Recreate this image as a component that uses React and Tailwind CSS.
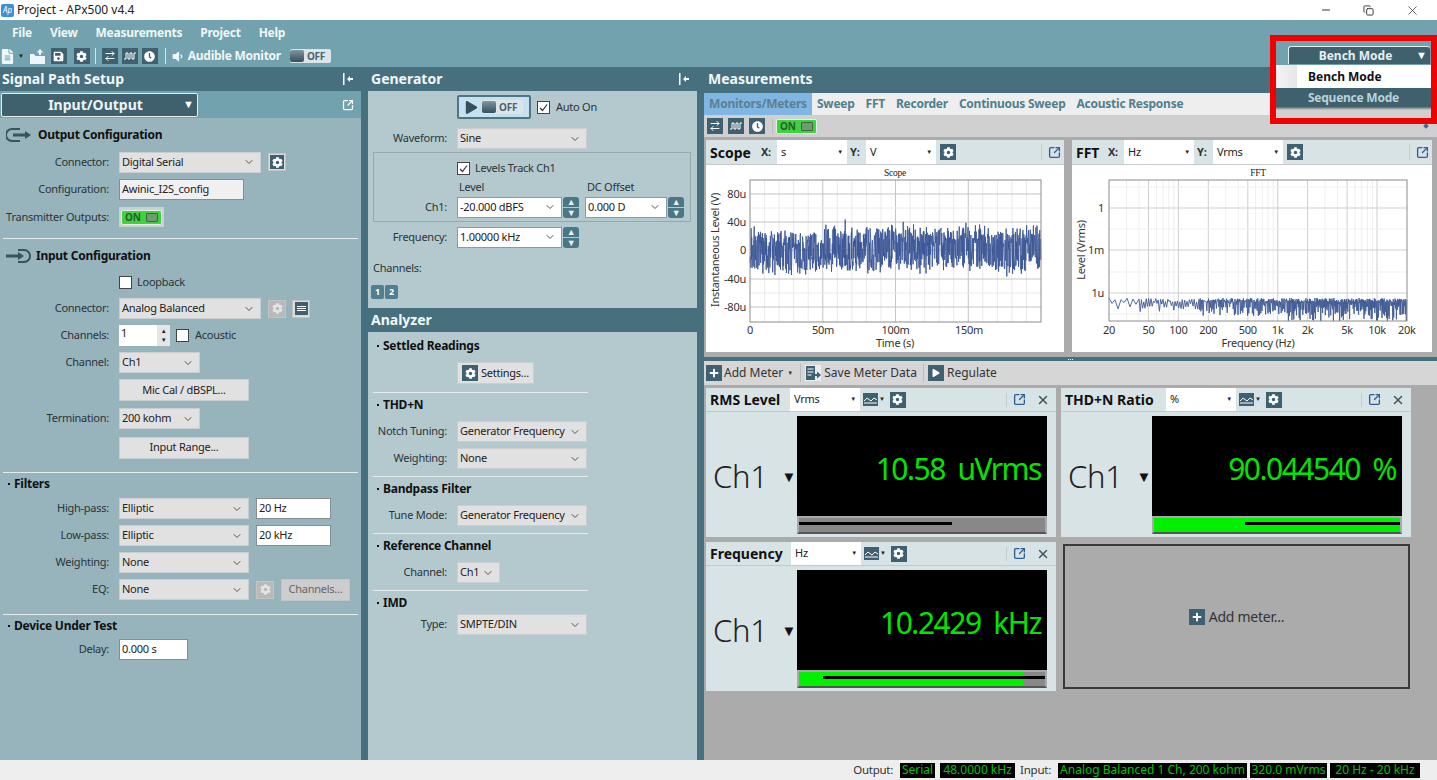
import { FaCog, FaClock, FaFileAlt, FaSave, FaPlay, FaPlus, FaVolumeDown } from 'react-icons/fa';
import { ChevronDown, SquareArrowOutUpRight, X, Minus, Copy, ArrowRightLeft } from 'lucide-react';

// seeded noise so the plots stay the same on every load
const makeRand = (seed) => () => {
  seed = (seed * 16807) % 2147483647;
  return seed / 2147483647;
};

const scopePath = (() => {
  const r = makeRand(4711);
  let d = '';
  for (let x = 44; x < 335; x += 0.28) {
    const slow = Math.sin(x * 0.09) * 2 + Math.sin(x * 0.021) * 2;
    const amp = 16 + r() * 10 + (r() > 0.985 ? 9 : 0);
    const y = 85 + slow + (r() > 0.5 ? 1 : -1) * amp * (0.15 + r() * 0.85);
    d += `${d ? 'L' : 'M'}${x.toFixed(1)} ${y.toFixed(1)}`;
  }
  return d;
})();

const fftPath = (() => {
  const r = makeRand(1234);
  let d = '';
  let x = 37;
  let up = true;
  while (x < 335) {
    const t = (x - 37) / 298;
    const depth = t < 0.1 ? 8 : t < 0.3 ? 11 : t < 0.6 ? 15 : 22;
    const y = up ? 133 + r() * 4 : 136 + r() * depth;
    d += `${d ? 'L' : 'M'}${x.toFixed(1)} ${Math.min(y, 156).toFixed(1)}`;
    x += t < 0.1 ? 3 : t < 0.3 ? 1.2 : t < 0.6 ? 0.6 : 0.45;
    up = !up;
  }
  return d;
})();

const Dock = () => (
  <svg width="11" height="12" viewBox="0 0 11 12" className="text-white">
    <rect x="0" y="0" width="1.5" height="12" fill="currentColor" />
    <path d="M4 6l3-3v2h3v2h-3v2z" fill="currentColor" />
  </svg>
);

const Box = ({ children, className = 'bg-[#3e6070] text-white' }) => (
  <span className={`inline-flex h-[16px] w-[16px] shrink-0 items-center justify-center ${className}`}>{children}</span>
);

const Gear = ({ off }) => (
  <span className={`inline-flex h-[18px] w-[18px] shrink-0 items-center justify-center border border-[#c4c4c4] ${off ? 'bg-[#b9b9b9] text-[#e4e4e4]' : 'bg-[#dcdcdc]'}`}>
    <span className={`inline-flex h-[14px] w-[14px] items-center justify-center ${off ? '' : 'bg-[#3e6070] text-white'}`}>
      <FaCog size={11} />
    </span>
  </span>
);

const GearBox = () => (
  <Box><FaCog size={11} /></Box>
);

const Wave = () => (
  <Box>
    <svg width="12" height="10" viewBox="0 0 12 10" fill="none" stroke="currentColor" strokeWidth="1">
      <path d="M0 8h2V2h2v6h2V2h2v6h2V2h2" />
    </svg>
  </Box>
);

const Swap = () => (
  <Box><ArrowRightLeft size={12} strokeWidth={2} /></Box>
);

const Clock = () => (
  <Box><FaClock size={11} /></Box>
);

const OpenProject = () => (
  <svg width="16" height="15" viewBox="0 0 16 15" fill="currentColor">
    <path d="M0 5h4l1.5 2H15v8H0z" />
    <path d="M10 0l3.5 3.5H11V6H9V3.5H6.5z" />
  </svg>
);

const SaveData = () => (
  <Box className="bg-[#e8eef0] text-[#3e6070]">
    <svg width="16" height="16" viewBox="0 0 16 16" fill="none" stroke="currentColor">
      <path d="M1 1h9v14H1z" fill="#3e6070" stroke="none" />
      <path d="M2.5 4h6M2.5 7h6M2.5 10h4" stroke="#fff" />
      <path d="M8 10h5" strokeWidth="2" />
      <path d="M12 6.5l4 3.5-4 3.5z" fill="currentColor" stroke="none" />
    </svg>
  </Box>
);

const Toggle = ({ on }) =>
  on ? (
    <span className="inline-flex h-[15px] w-[41px] items-center justify-between rounded-[2px] border border-[#e2efe2] bg-[#3fd13f] px-[3px] text-[10px] font-bold text-[#24602a]">
      ON
      <span className="h-[9px] w-[12px] rounded-[1px] bg-[#6f9c6f] border border-[#3a6a3a]" />
    </span>
  ) : (
    <span className="inline-flex h-[14px] w-[41px] items-center gap-[3px] rounded-[2px] bg-[#dbe4e7] pr-[2px] text-[10px] font-bold text-[#4b6470]">
      <span className="h-[12px] w-[14px] rounded-[2px] bg-gradient-to-b from-[#8297a1] to-[#34505e]" />
      OFF
    </span>
  );

const Select = ({ value, w, white }) => (
  <span className={`flex h-[21px] shrink-0 items-center justify-between border pl-[2px] pr-[5px] text-[11px] text-[#222] ${w} ${white ? 'border-[#8b9a9f] bg-white' : 'border-[#c9cfd1] bg-[#e1e1e1]'}`}>
    <span className="whitespace-nowrap">{value}</span>
    <ChevronDown size={12} className="shrink-0 text-[#555]" />
  </span>
);

const TextBox = ({ value, w, bg = 'bg-white' }) => (
  <span className={`flex h-[21px] shrink-0 items-center border border-[#868e91] pl-[2px] text-[11px] text-[#222] ${w} ${bg}`}>{value}</span>
);

const Btn = ({ children, w, muted }) => (
  <span className={`flex h-[22px] shrink-0 items-center justify-center border text-[11px] ${w} ${muted ? 'border-[#bdc5c8] bg-[#cdcdcd] text-[#666]' : 'border-[#c9cfd1] bg-[#e1e1e1] text-[#222]'}`}>{children}</span>
);

const Check = ({ checked }) => (
  <span className="flex h-[13px] w-[13px] shrink-0 items-center justify-center border border-[#444] bg-white">
    {checked && (
      <svg width="11" height="11" viewBox="0 0 11 11" fill="none" stroke="#333" strokeWidth="1.2">
        <path d="M2 6l2.5 2.5L9 2.5" />
      </svg>
    )}
  </span>
);

const Spinner = () => (
  <span className="flex w-[16px] shrink-0 flex-col gap-[1px]">
    <span className="flex h-[10px] items-center justify-center rounded-t-[3px] bg-[#4a7685] text-[9px] leading-none text-[#e8f0f2]">▲</span>
    <span className="flex h-[10px] items-center justify-center rounded-b-[3px] bg-[#4a7685] text-[9px] leading-none text-[#e8f0f2]">▼</span>
  </span>
);

// left column rows: label ends at x=109, control starts at x=119
const Row = ({ label, h = 'h-[27px]', children }) => (
  <div className={`flex items-center ${h}`}>
    <span className="w-[109px] shrink-0 whitespace-nowrap text-right text-[11px] text-[#2b3438]">{label}</span>
    <div className="ml-[10px] flex items-center gap-[7px]">{children}</div>
  </div>
);

// middle column rows: label ends at x=447, control starts at x=457
const GenRow = ({ label, h = 'h-[27px]', children }) => (
  <div className={`flex items-center ${h}`}>
    <span className="w-[79px] shrink-0 whitespace-nowrap text-right text-[11px] text-[#2b3438]">{label}</span>
    <div className="ml-[10px] flex items-center gap-[1px]">{children}</div>
  </div>
);

const Section = ({ title, h, pl = 'pl-[8px]' }) => (
  <div className={`flex items-center gap-[4px] text-[12px] font-bold text-[#111] ${pl} ${h}`}>
    <span className="h-[2px] w-[2px] bg-[#111]" />
    {title}
  </div>
);

const PanelTitle = ({ children, dock }) => (
  <div className="flex h-[24px] shrink-0 items-center justify-between pb-[1px] pl-[2px] pr-[7px] text-[14px] font-bold tracking-normal text-[#f2f7f8]">
    <span>{children}</span>
    {dock && <Dock />}
  </div>
);

const Arrow = ({ dir }) => (
  <svg width="26" height="16" viewBox="0 0 26 16" fill="none" stroke="#38525e" strokeWidth="2">
    {dir === 'out' ? (
      <>
        <path d="M14 2H6a6 6 0 0 0 0 12h8" />
        <path d="M7 8h14" strokeWidth="3" />
        <path d="M19 4l6 4-6 4z" fill="#38525e" stroke="none" />
      </>
    ) : (
      <>
        <path d="M12 2h6a6 6 0 0 1 0 12h-6" />
        <path d="M0 8h14" strokeWidth="3" />
        <path d="M12 4l6 4-6 4z" fill="#38525e" stroke="none" />
      </>
    )}
  </svg>
);

const SignalPath = () => (
  <div className="flex h-full w-[361px] shrink-0 flex-col">
    <PanelTitle dock>Signal Path Setup</PanelTitle>
    <div className="flex h-[27px] shrink-0 items-center justify-between bg-[#71a2ad] pl-[1px] pr-[7px]">
      <span className="relative flex h-[24px] w-[197px] items-center justify-center rounded-[2px] border border-[#e6eef0] bg-[#3f616d] pr-[8px] text-[14px] font-bold tracking-normal text-[#eef4f5]">
        Input/Output
        <span className="absolute right-[3px] text-[11px] text-white">▼</span>
      </span>
      <SquareArrowOutUpRight size={12} strokeWidth={2.5} className="text-white" />
    </div>
    <div className="flex-1 bg-[#97b3bc] pt-[4px]">
      <div className="flex h-[26px] items-center gap-[6px] pl-[6px] text-[12px] font-bold text-[#111]">
        <Arrow dir="out" /> Output Configuration
      </div>
      <Row label="Connector:" h="h-[28px]">
        <Select value="Digital Serial" w="w-[142px]" />
        <Gear />
      </Row>
      <Row label="Configuration:">
        <TextBox value="Awinic_I2S_config" w="w-[125px]" bg="bg-[#f0f0f0]" />
      </Row>
      <Row label="Transmitter Outputs:" h="h-[28px]">
        <span className="flex h-[20px] w-[45px] items-center justify-center bg-[#c8d2d4]"><Toggle on /></span>
      </Row>
      <div className="mx-[3px] mt-[7px] h-[1px] bg-[#e4ecee]" />
      <div className="flex h-[34px] items-center gap-[4px] pl-[6px] text-[12px] font-bold text-[#111]">
        <Arrow dir="in" /> Input Configuration
      </div>
      <div className="flex h-[18px] items-center gap-[5px] pl-[119px] text-[11px] text-[#2b3438]">
        <Check /> Loopback
      </div>
      <div className="mt-[4px]">
        <Row label="Connector:">
          <Select value="Analog Balanced" w="w-[142px]" />
          <Gear off />
          <span className="-ml-[1px] flex h-[18px] w-[18px] items-center justify-center border border-[#c4c4c4] bg-[#dcdcdc]">
            <span className="flex h-[13px] w-[13px] flex-col justify-center gap-[1px] bg-[#3e6070] px-[2px]">
              <span className="h-[1px] bg-white" /><span className="h-[1px] bg-white" /><span className="h-[1px] bg-white" />
            </span>
          </span>
        </Row>
      </div>
      <Row label="Channels:">
        <span className="flex h-[21px] w-[51px] items-start justify-between bg-white pl-[2px] text-[11px] text-[#222]">
          1
          <span className="flex h-full w-[13px] flex-col justify-center bg-[#e6e6e6] text-center text-[6px] leading-[9px] text-[#222]">
            <span>▲</span><span>▼</span>
          </span>
        </span>
        <span className="-ml-[1px] flex items-center gap-[6px] text-[11px] text-[#2b3438]"><Check /> Acoustic</span>
      </Row>
      <Row label="Channel:">
        <Select value="Ch1" w="w-[81px]" />
      </Row>
      <Row label="" h="h-[28px]">
        <Btn w="w-[130px]">Mic Cal / dBSPL...</Btn>
      </Row>
      <Row label="Termination:" h="h-[29px]">
        <Select value="200 kohm" w="w-[81px]" />
      </Row>
      <Row label="" h="h-[29px]">
        <Btn w="w-[130px]">Input Range...</Btn>
      </Row>
      <div className="mx-[3px] mt-[10px] h-[1px] bg-[#e4ecee]" />
      <Section title="Filters" h="h-[22px]" />
      <Row label="High-pass:">
        <Select value="Elliptic" w="w-[130px]" />
        <TextBox value="20 Hz" w="w-[75px]" />
      </Row>
      <Row label="Low-pass:">
        <Select value="Elliptic" w="w-[130px]" />
        <TextBox value="20 kHz" w="w-[75px]" />
      </Row>
      <Row label="Weighting:">
        <Select value="None" w="w-[130px]" />
      </Row>
      <Row label="EQ:">
        <Select value="None" w="w-[130px]" />
        <Gear off />
        <Btn w="w-[69px]" muted>Channels...</Btn>
      </Row>
      <div className="mx-[3px] mt-[11px] h-[1px] bg-[#e4ecee]" />
      <Section title="Device Under Test" h="h-[21px]" />
      <Row label="Delay:">
        <TextBox value="0.000 s" w="w-[69px]" />
      </Row>
    </div>
  </div>
);

const Rule = ({ mt }) => <div className={`ml-[5px] h-[1px] w-[215px] bg-[#e4ecee] ${mt}`} />;

const Middle = () => (
  <div className="ml-[6px] flex h-full w-[330px] shrink-0 flex-col">
    <PanelTitle dock><span className="pl-[2px]">Generator</span></PanelTitle>
    <div className="ml-[1px] h-[217px] shrink-0 bg-[#b3c9ce] pt-[4px]">
      <div className="flex h-[24px] items-center pl-[89px]">
        <span className="flex h-[24px] w-[74px] items-center gap-[4px] rounded-[2px] border-2 border-[#4d7585] bg-[#c5e0ef] pl-[6px] text-[#33505e]">
          <FaPlay size={13} />
          <Toggle />
        </span>
        <span className="ml-[6px] flex items-center gap-[6px] text-[11px] text-[#2b3438]"><Check checked /> Auto On</span>
      </div>
      <div className="mt-[9px]">
        <GenRow label="Waveform:" h="h-[21px]"><Select value="Sine" w="w-[130px]" /></GenRow>
      </div>
      <div className="ml-[5px] mt-[3px] h-[70px] w-[318px] border border-[#96a8ad]">
        <div className="flex h-[30px] items-center gap-[5px] pl-[83px] text-[11px] text-[#2b3438]"><Check checked /> Levels Track Ch1</div>
        <div className="flex h-[9px] items-center pl-[85px] text-[11px] text-[#2b3438]">
          <span className="w-[128px]">Level</span>
          <span>DC Offset</span>
        </div>
        <div className="flex h-[29px] items-center pt-[1px]">
          <span className="w-[73px] text-right text-[11px] text-[#2b3438]">Ch1:</span>
          <div className="ml-[10px] flex items-center gap-[1px]">
            <Select value="-20.000 dBFS" w="w-[105px]" white />
            <Spinner />
            <span className="ml-[5px]"><Select value="0.000 D" w="w-[82px]" white /></span>
            <Spinner />
          </div>
        </div>
      </div>
      <div className="mt-[4px]">
        <GenRow label="Frequency:" h="h-[22px]">
          <Select value="1.00000 kHz" w="w-[105px]" white />
          <Spinner />
        </GenRow>
      </div>
      <div className="mt-[12px] pl-[5px] text-[11px] text-[#2b3438]">Channels:</div>
      <div className="mt-[8px] flex gap-[1px] pl-[3px]">
        <span className="flex h-[14px] w-[13px] items-center justify-center rounded-[2px] bg-[#4f7f90] text-[9px] font-bold text-white">1</span>
        <span className="flex h-[14px] w-[13px] items-center justify-center rounded-[2px] bg-[#4f7f90] text-[9px] font-bold text-white">2</span>
      </div>
    </div>
    <PanelTitle><span className="pl-[2px]">Analyzer</span></PanelTitle>
    <div className="ml-[1px] flex-1 bg-[#b3c9ce] pt-[3px]">
      <Section title="Settled Readings" h="h-[21px]" pl="pl-[9px]" />
      <div className="mt-[6px] pl-[89px]">
        <Btn w="w-[77px]"><span className="flex items-center gap-[3px]"><GearBox /> Settings...</span></Btn>
      </div>
      <Rule mt="mt-[8px]" />
      <Section title="THD+N" h="h-[23px]" pl="pl-[9px]" />
      <div className="mt-[2px]">
        <GenRow label="Notch Tuning:" h="h-[27px]"><Select value="Generator Frequency" w="w-[130px]" /></GenRow>
      </div>
      <GenRow label="Weighting:"><Select value="None" w="w-[130px]" /></GenRow>
      <Rule mt="mt-[4px]" />
      <Section title="Bandpass Filter" h="h-[23px]" pl="pl-[9px]" />
      <div className="mt-[2px]">
        <GenRow label="Tune Mode:" h="h-[27px]"><Select value="Generator Frequency" w="w-[130px]" /></GenRow>
      </div>
      <Rule mt="mt-[4px]" />
      <Section title="Reference Channel" h="h-[24px]" pl="pl-[9px]" />
      <div className="mt-[1px]">
        <GenRow label="Channel:" h="h-[27px]"><Select value="Ch1" w="w-[43px]" /></GenRow>
      </div>
      <Rule mt="mt-[4px]" />
      <Section title="IMD" h="h-[23px]" pl="pl-[9px]" />
      <GenRow label="Type:" h="h-[21px]"><Select value="SMPTE/DIN" w="w-[130px]" /></GenRow>
    </div>
  </div>
);

const AxisSelect = ({ value }) => (
  <span className="flex h-[24px] w-[70px] shrink-0 items-center justify-between bg-white px-[4px] text-[11px] text-[#222]">
    {value}
    <span className="text-[6px] text-[#222]">▼</span>
  </span>
);

const ChartPanel = ({ title, x, y, w, titleW, children }) => (
  <div className={`flex h-[212px] flex-col bg-white ${w}`}>
    <div className="flex h-[25px] shrink-0 items-center bg-[#d8e3e6] border-b border-[#c4c8ca] pl-[4px] pr-[3px]">
      <span className={`shrink-0 text-[14px] font-bold tracking-normal text-[#111] ${titleW}`}>{title}</span>
      <span className="w-[16px] shrink-0 text-[11px] font-bold text-[#333]">X:</span>
      <AxisSelect value={x} />
      <span className="w-[19px] shrink-0 pl-[3px] text-[11px] font-bold text-[#333]">Y:</span>
      <AxisSelect value={y} />
      <span className="ml-[4px] flex"><GearBox /></span>
      <span className="ml-auto flex h-[16px] items-center border-l border-[#c4cccf] pl-[6px]">
        <SquareArrowOutUpRight size={13} strokeWidth={2.5} className="text-[#2d5f96]" />
      </span>
    </div>
    {children}
  </div>
);

const tickClass = 'fill-[#333] text-[11px]';

const ScopeChart = () => {
  const xMinor = [];
  for (let i = 1; i < 20; i++) xMinor.push(44 + i * 14.55);
  const yLines = [29, 43, 57, 71, 85, 99, 114, 128, 142];
  const xTicks = [[44, '0'], [117, '50m'], [189.5, '100m'], [263, '150m']];
  const yTicks = [[29, '80u'], [57, '40u'], [85, '0'], [113.5, '-40u'], [142, '-80u']];
  return (
    <svg width="356" height="187" viewBox="0 0 356 187" className="font-['Noto_Sans',sans-serif]">
      <text x="189" y="11" textAnchor="middle" fontFamily="Liberation Serif" fontSize="9.5" fill="#222">Scope</text>
      {xMinor.map((x) => (
        <line key={x} x1={x} x2={x} y1="15" y2="157" stroke={Math.round((x - 44) / 14.55) % 5 === 0 ? '#c4c4c4' : '#eaeaea'} />
      ))}
      {yLines.map((y, i) => (
        <line key={y} x1="44" x2="335" y1={y} y2={y} stroke={i % 2 === 0 ? '#c4c4c4' : '#eaeaea'} />
      ))}
      <path d={scopePath} fill="none" stroke="#3c5796" strokeWidth="0.9" />
      <rect x="44" y="15" width="291" height="142" fill="none" stroke="#8c8c8c" />
      {xTicks.map(([x, t]) => (
        <text key={t} x={x} y="169" textAnchor="middle" className={tickClass}>{t}</text>
      ))}
      {yTicks.map(([y, t]) => (
        <text key={t} x="40" y={y + 4} textAnchor="end" className={tickClass}>{t}</text>
      ))}
      <text x="189" y="182" textAnchor="middle" className={tickClass}>Time (s)</text>
      <text transform="translate(13 85) rotate(-90)" textAnchor="middle" className={tickClass}>Instantaneous Level (V)</text>
    </svg>
  );
};

const FftChart = () => {
  const decade = 99.3;
  const xAt = (f) => 37 + Math.log10(f / 20) * decade;
  const minor = [30, 40, 60, 70, 80, 90, 300, 400, 600, 700, 800, 900, 3000, 4000, 6000, 7000, 8000, 9000];
  const major = [50, 100, 200, 500, 1000, 2000, 5000, 10000];
  const yMajor = [43, 85, 128];
  const yMinor = [22, 64, 107, 149];
  const labels = [[20, '20'], [50, '50'], [100, '100'], [200, '200'], [500, '500'], [1000, '1k'], [2000, '2k'], [5000, '5k'], [10000, '10k'], [20000, '20k']];
  return (
    <svg width="360" height="187" viewBox="0 0 360 187" className="font-['Noto_Sans',sans-serif]">
      <text x="186" y="11" textAnchor="middle" fontFamily="Liberation Serif" fontSize="9.5" fill="#222">FFT</text>
      {minor.map((f) => (
        <line key={f} x1={xAt(f)} x2={xAt(f)} y1="15" y2="156" stroke="#efefef" />
      ))}
      {major.map((f) => (
        <line key={f} x1={xAt(f)} x2={xAt(f)} y1="15" y2="156" stroke="#cfcfcf" />
      ))}
      {yMinor.map((y) => (
        <line key={y} x1="37" x2="335" y1={y} y2={y} stroke="#efefef" />
      ))}
      {yMajor.map((y) => (
        <line key={y} x1="37" x2="335" y1={y} y2={y} stroke="#cfcfcf" />
      ))}
      <path d={fftPath} fill="none" stroke="#3f5a94" strokeWidth="0.9" />
      <rect x="37" y="15" width="298" height="141" fill="none" stroke="#8c8c8c" />
      {labels.map(([f, t]) => (
        <text key={t} x={xAt(f)} y="169" textAnchor="middle" className={tickClass}>{t}</text>
      ))}
      {[[43, '1'], [85, '1m'], [128, '1u']].map(([y, t]) => (
        <text key={t} x="32" y={y + 4} textAnchor="end" className={tickClass}>{t}</text>
      ))}
      <text x="186" y="182" textAnchor="middle" className={tickClass}>Frequency (Hz)</text>
      <text transform="translate(13 85) rotate(-90)" textAnchor="middle" className={tickClass}>Level (Vrms)</text>
    </svg>
  );
};

const Meter = ({ title, titleW, unit, value, fill, line }) => (
  <div className="flex h-[149px] w-[350px] flex-col bg-[#d8e3e6]">
    <div className="flex h-[24px] shrink-0 items-center border-b border-[#c4c8ca] pl-[4px] pr-[6px]">
      <span className={`shrink-0 whitespace-nowrap text-[14px] font-bold tracking-normal text-[#111] ${titleW}`}>{title}</span>
      <span className="flex h-[23px] w-[70px] shrink-0 items-center justify-between bg-white px-[4px] text-[11px] text-[#222]">
        {unit}
        <span className="text-[6px]">▼</span>
      </span>
      <span className="ml-[3px] flex items-center gap-[1px]">
        <span className="flex h-[13px] w-[15px] items-center justify-center bg-[#3e6070]">
          <svg width="13" height="9" viewBox="0 0 13 9" fill="none" stroke="#fff" strokeWidth="1"><path d="M0 6l3-3 4 3 3-3 3 2M0 8h13" /></svg>
        </span>
        <span className="text-[6px] text-[#222]">▼</span>
      </span>
      <span className="ml-[5px] flex"><GearBox /></span>
      <span className="ml-auto flex items-center gap-[10px] border-l border-[#c4cccf] pl-[6px]">
        <SquareArrowOutUpRight size={13} strokeWidth={2.5} className="text-[#2d5f96]" />
        <X size={14} strokeWidth={2.5} className="text-[#3e5560]" />
      </span>
    </div>
    <div className="flex flex-1 items-stretch pb-[3px] pt-[4px]">
      <div className="flex w-[91px] shrink-0 items-center justify-between pl-[7px] pr-[1px] pt-[3px]">
        <span className="text-[31px] font-light leading-none text-[#222]">Ch1</span>
        <span className="text-[15px] leading-none text-[#111]">▼</span>
      </div>
      <div className="flex w-[250px] flex-col">
        <div className="flex h-[100px] items-center justify-end bg-black pr-[6px] pt-[5px] text-[30px] leading-none tracking-[-1.5px] text-[#00e600] whitespace-pre">{value}</div>
        <div className="relative h-[18px] border-2 border-[#a9a9a9] border-b-[#555] bg-[#888]">
          {fill && <div className={`h-full bg-[#00f000] ${fill}`} />}
          <div className={`absolute top-[4px] h-[3px] bg-black ${line}`} />
        </div>
      </div>
    </div>
  </div>
);

const tabs = ['Sweep', 'FFT', 'Recorder', 'Continuous Sweep', 'Acoustic Response'];

const Measurements = () => (
  <div className="ml-[7px] flex h-full flex-1 flex-col">
    <PanelTitle><span className="pl-[2px]">Measurements</span></PanelTitle>
    <div className="mt-[2px] flex h-[22px] shrink-0 items-center bg-[#eeeeee] text-[12px] font-bold text-[#4f7f8f]">
      <span className="flex h-full w-[108px] items-center justify-center bg-[#7fb6e4] text-[#5d7f92]">Monitors/Meters</span>
      {tabs.map((t) => (
        <span key={t} className="ml-[5px] mr-[6px] whitespace-nowrap">{t}</span>
      ))}
    </div>
    <div className="flex h-[22px] shrink-0 items-center gap-[5px] bg-[#d0d0d0] pl-[3px]">
      <Swap /><Wave /><Clock />
      <span className="ml-[2px] flex border-l border-[#bbb] pl-[3px]"><Toggle on /></span>
      <span className="ml-auto mr-[9px] h-[4px] w-[4px] rotate-45 bg-[#3e6a9a]" />
    </div>
    <div className="flex h-[220px] shrink-0 gap-[8px] bg-[#ababab] pl-[2px] pt-[3px]">
      <ChartPanel title="Scope" x="s" y="V" w="w-[358px]" titleW="w-[51px]"><ScopeChart /></ChartPanel>
      <ChartPanel title="FFT" x="Hz" y="Vrms" w="w-[360px]" titleW="w-[32px]"><FftChart /></ChartPanel>
    </div>
    <div className="flex h-[4px] shrink-0 items-center justify-center gap-[1px] bg-[#47707f]">
      <span className="h-[1px] w-[1px] bg-white" /><span className="h-[1px] w-[1px] bg-white" /><span className="h-[1px] w-[1px] bg-white" />
    </div>
    <div className="flex h-[24px] shrink-0 items-center bg-[#d6d6d6] pl-[2px] text-[12px] tracking-normal text-[#333]">
      <span className="flex items-center gap-[2px]"><Box><FaPlus size={10} /></Box> Add Meter <span className="ml-[2px] text-[6px]">▼</span></span>
      <span className="ml-[7px] flex items-center gap-[3px] border-l border-[#bbb] pl-[4px]"><SaveData /> Save Meter Data</span>
      <span className="ml-[6px] flex items-center gap-[3px] border-l border-[#bbb] pl-[4px]"><Box><FaPlay size={8} /></Box> Regulate</span>
    </div>
    <div className="flex-1 bg-[#ababab] pl-[2px] pt-[3px]">
      <div className="flex gap-[5px]">
        <Meter title="RMS Level" titleW="w-[80px]" unit="Vrms" value="10.58  uVrms" line="left-0 w-[153px]" />
        <Meter title="THD+N Ratio" titleW="w-[101px]" unit="%" value="90.044540  %" fill="w-full" line="left-[91px] right-0" />
      </div>
      <div className="mt-[5px] flex gap-[5px]">
        <Meter title="Frequency" titleW="w-[81px]" unit="Hz" value="10.2429  kHz" fill="w-[224px]" line="left-[24px] right-0" />
        <div className="ml-[2px] mt-[2px] flex h-[145px] w-[347px] items-center justify-center gap-[4px] border-2 border-[#3a3a3a] bg-[#ababab] text-[14px] text-[#333]">
          <Box><FaPlus size={10} /></Box> Add meter...
        </div>
      </div>
    </div>
  </div>
);

const ModeMenu = () => (
  <div className="absolute left-[1270px] top-[35px] h-[89px] w-[167px] border-[6px] border-[#f00000] bg-[#d0d0d0]">
    <div className="flex h-[24px] items-end justify-end bg-[#71a2ad] pb-[1px] pr-[1px]">
      <span className="relative flex h-[18px] w-[142px] items-center justify-center rounded-t-[3px] border-t border-l border-[#e6eef0] bg-[#3f616d] pr-[8px] text-[12px] font-bold tracking-normal text-[#e6eff1]">
        Bench Mode
        <span className="absolute right-[3px] text-[11px] text-white">▼</span>
      </span>
    </div>
    <div className="flex h-[23px] bg-white">
      <span className="w-[21px] bg-gradient-to-r from-[#f4f4f4] to-[#e6e6e6]" />
      <span className="flex items-center pl-[11px] text-[12px] font-bold tracking-normal text-[#111]">Bench Mode</span>
    </div>
    <div className="flex h-[19px] items-center bg-[#3f616d] pl-[32px] text-[12px] font-bold text-[#b9d2da]">Sequence Mode</div>
    <div className="h-[3px] bg-gradient-to-b from-[#666] to-[#d0d0d0]" />
  </div>
);

const inputBoxes = [
  ['Analog Balanced 1 Ch, 200 kohm', 'w-[189px]'],
  ['320.0 mVrms', 'w-[77px]'],
  ['20 Hz - 20 kHz', 'w-[90px]'],
];

const StatusBox = ({ text, w }) => (
  <span className={`flex h-[15px] items-center justify-center whitespace-nowrap bg-black text-[12px] tracking-normal text-[#00c000] ${w}`}>{text}</span>
);

export default function App() {
  return (
    <div className="relative flex h-[780px] w-[1437px] flex-col overflow-hidden bg-[#47707f] font-['Noto_Sans',sans-serif] tracking-[-0.25px]">
      <div className="flex h-[20px] shrink-0 items-center bg-white pl-[1px] pr-[17px] text-[12px] tracking-normal text-[#222]">
        <span className="flex h-[13px] w-[13px] items-center justify-center rounded-[2px] bg-[#3f8ed6] text-[8px] italic text-white">Ap</span>
        <span className="ml-[3px]">Project - APx500 v4.4</span>
        <span className="ml-auto flex items-center gap-[31px] text-[#333]">
          <Minus size={12} />
          <Copy size={11} />
          <X size={15} strokeWidth={1.2} />
        </span>
      </div>

      <div className="h-[47px] shrink-0 bg-[#71a2ad]">
        <div className="flex h-[25px] items-center gap-[18px] pl-[12px] text-[12px] font-bold text-[#f0f6f7]">
          <span>File</span><span>View</span><span>Measurements</span><span>Project</span><span>Help</span>
        </div>
        <div className="flex h-[22px] items-center text-[#f0f6f7]">
          <FaFileAlt size={15} />
          <span className="ml-[3px] text-[6px] text-[#222]">▼</span>
          <span className="ml-[6px] flex"><OpenProject /></span>
          <span className="ml-[5px] flex"><Box><FaSave size={11} /></Box></span>
          <span className="ml-[7px] flex"><GearBox /></span>
          <span className="ml-[5px] h-[16px] w-[1px] bg-[#d8e4e7]" />
          <span className="ml-[6px] flex gap-[4px]"><Swap /><Wave /><Clock /></span>
          <span className="ml-[7px] h-[16px] w-[1px] bg-[#d8e4e7]" />
          <FaVolumeDown size={13} className="ml-[5px]" />
          <span className="ml-[4px] whitespace-nowrap text-[12px] font-bold">Audible Monitor</span>
          <span className="ml-[9px] flex"><Toggle /></span>
        </div>
      </div>

      <div className="flex h-[693px] shrink-0">
        <SignalPath />
        <Middle />
        <Measurements />
      </div>

      <div className="flex h-[20px] shrink-0 items-center justify-end gap-[3px] bg-[#eeeeee] pr-[17px] text-[11.5px] text-[#333]">
        <span className="mr-[4px]">Output:</span>
        <span className="mr-[2px] flex"><StatusBox text="Serial" w="w-[35px]" /></span>
        <StatusBox text="48.0000 kHz" w="w-[75px]" />
        <span className="ml-[2px] mr-[4px]">Input:</span>
        {inputBoxes.map(([t, w]) => <StatusBox key={t} text={t} w={w} />)}
      </div>

      <ModeMenu />
    </div>
  );
}
